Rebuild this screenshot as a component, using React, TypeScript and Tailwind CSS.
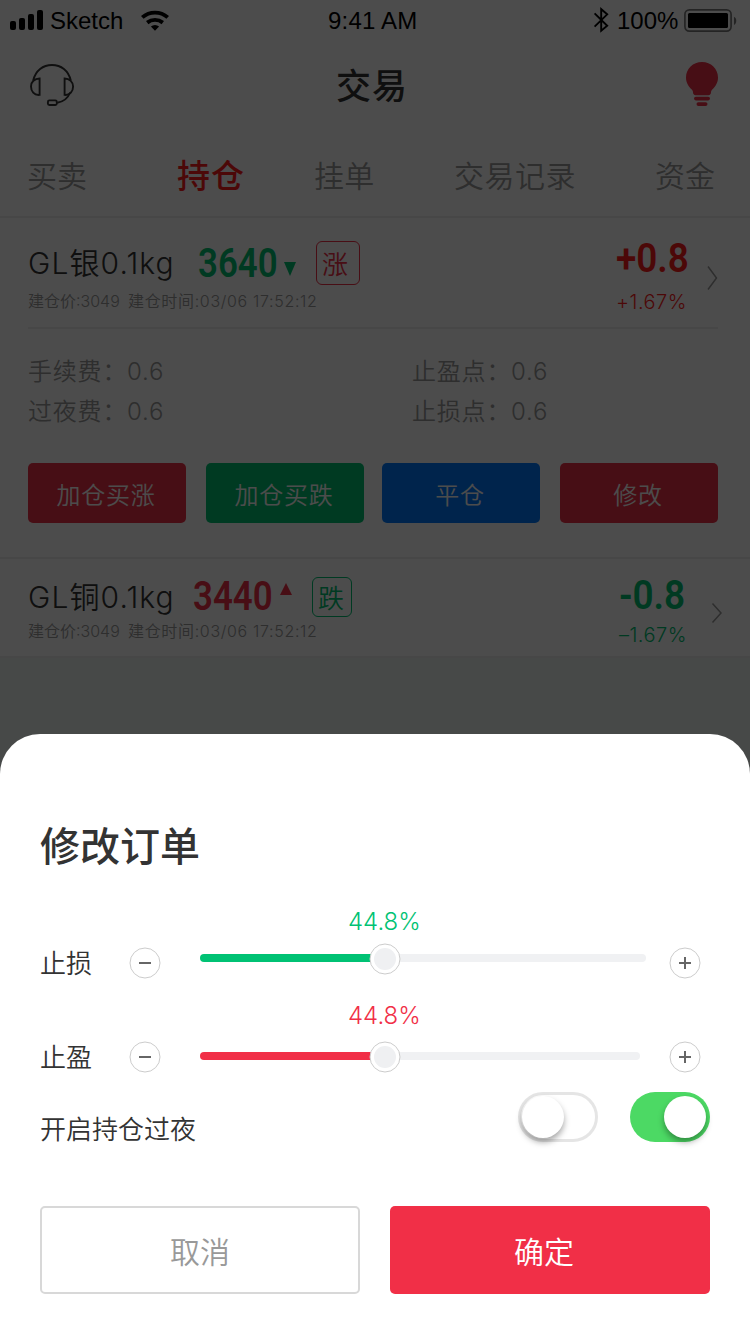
import type { ReactNode } from "react";

const statusFont = "font-['Liberation_Sans',sans-serif]";
const dinFont = "font-['Roboto','Liberation_Sans',sans-serif] font-semibold";

function Signal() {
  return (
    <svg width="34" height="22" viewBox="0 0 34 22" className="block">
      <rect x="0" y="11" width="6" height="9" rx="2" />
      <rect x="9" y="8" width="6" height="12" rx="2" />
      <rect x="18" y="4" width="6" height="16" rx="2" />
      <rect x="27" y="0" width="6" height="20" rx="2" />
    </svg>
  );
}

function Wifi() {
  return (
    <svg width="30" height="22" viewBox="140 9 30 22" className="block">
      <g fill="none" stroke="#000" strokeWidth="3.9">
        <path d="M142.3 16.4a19.2 19.2 0 0 1 25.4 0" />
        <path d="M147.2 21.6a12.7 12.7 0 0 1 15.6 0" />
      </g>
      <path d="M155 29.8l-4.1-4.2a6 6 0 0 1 8.2 0z" />
    </svg>
  );
}

function Bluetooth() {
  return (
    <svg width="16" height="26" viewBox="593 7 16 26" className="mb-[2px] block">
      <path d="M594.6 13.4L607.2 25.8L601.2 30.8V9.2L607.2 14.4L594.6 26.6" fill="none" stroke="#000" strokeWidth="1.9" />
    </svg>
  );
}

function Battery() {
  return (
    <svg width="54" height="24" viewBox="684 8 54 24" className="mb-[2px] block">
      <rect x="684.9" y="9.9" width="46.2" height="21.2" rx="4.5" fill="none" stroke="#7a7a7a" strokeWidth="1.7" />
      <rect x="688" y="13" width="40" height="15" rx="1.5" />
      <path d="M734 16.8c3 1.2 3 7 0 8.2z" fill="#7a7a7a" />
    </svg>
  );
}

function Headset() {
  return (
    <svg width="46" height="44" viewBox="29 63 46 44" className="mt-[2px] block" fill="none" stroke="#333" strokeWidth="1.9">
      <path d="M33.2 80.5C35.5 70.5 43 65 52 65s16.500 5.500 18.800 15.500" />
      <path d="M39.600 78.500v16.400C34 95.500 31 91 31 86.500s3.500-8 8.600-8z" />
      <path d="M64.600 78.500v16.400C70 95.500 73.100 91 73.100 86.500s-3.500-8-8.500-8z" />
      <path d="M70.200 92.500c-2.300 5.500-6.700 9.300-13 10.300" />
      <rect x="47.900" y="100.400" width="8.900" height="4.600" rx="1.500" />
    </svg>
  );
}

function Bulb() {
  return (
    <svg width="34" height="46" viewBox="685 61 34 46" className="block" fill="#ef2f46">
      <path d="M702 62c9 0 16 6.800 16 15.500 0 5.200-2.600 9-5.500 11.700-1 1-1.500 1.900-1.500 3.100 0 1.700-.9 2.900-2.600 2.900h-12.800c-1.700 0-2.600-1.200-2.600-2.900 0-1.200-.5-2.100-1.500-3.100-2.900-2.700-5.500-6.500-5.500-11.700C686 68.800 693 62 702 62z" />
      <rect x="694" y="96.800" width="16" height="3.600" rx="1.800" />
      <rect x="696.500" y="102.200" width="11" height="3.800" rx="1.900" />
    </svg>
  );
}

function Chevron({ small = false }: { small?: boolean }) {
  return small ? (
    <svg width="12" height="22" viewBox="0 0 12 22" className="block">
      <path d="M1.500 1.500L10 11L1.500 20.500" fill="none" stroke="#999" strokeWidth="1.500" />
    </svg>
  ) : (
    <svg width="12" height="26" viewBox="0 0 12 26" className="block">
      <path d="M2 1.500L10.500 13L2 24.500" fill="none" stroke="#999" strokeWidth="1.500" />
    </svg>
  );
}

function StatusBar() {
  return (
    <div className={`flex h-[42px] items-center pl-2.5 pr-3 text-[24px] leading-none text-black ${statusFont}`}>
      <div className="flex w-[318px] items-center">
        <Signal />
        <span className="ml-[6px] w-[90px]">Sketch</span>
        <Wifi />
      </div>
      <span className="w-[265px] tracking-[0.2px] whitespace-nowrap">9:41 AM</span>
      <Bluetooth />
      <span className="ml-[8px] w-[67px]">100%</span>
      <Battery />
    </div>
  );
}

function Tabs() {
  return (
    <nav className="flex h-[88px] items-center pt-[8px] pl-[27px] text-[30px] leading-[44px] font-[350] text-[#999]">
      <span className="w-[150px]">买卖</span>
      <span className="w-[137px] text-[33px] font-medium tracking-[1px] text-[#ff1c1c]">持仓</span>
      <span className="w-[140px] tracking-[0.3px]">挂单</span>
      <span className="w-[201px] tracking-[0.5px]">交易记录</span>
      <span>资金</span>
    </nav>
  );
}

function OpenInfo() {
  return (
    <p className="flex h-5 items-center gap-2.5 text-[16px] leading-5 font-[350] text-[#999]">
      <span className="w-[90px] whitespace-nowrap">建仓价:3049</span>
      <span className="tracking-[0.67px] whitespace-nowrap">建仓时间:03/06 17:52:12</span>
    </p>
  );
}

function Fee({ label }: { label: string }) {
  return (
    <div className="flex h-10 items-center pt-px text-[24px] font-[350] tracking-[0.8px] text-[#999]">
      <span className="w-[99px] whitespace-nowrap">{label}：</span>
      <span>0.6</span>
    </div>
  );
}

function ActionButton({ className, children }: { className: string; children: ReactNode }) {
  return (
    <button className={`flex h-[60px] w-[158px] items-center justify-center rounded-[5px] pt-[5px] pr-[2px] text-[24px] font-[350] tracking-[0.8px] text-white ${className}`}>
      {children}
    </button>
  );
}

function RoundButton({ plus = false }: { plus?: boolean }) {
  return (
    <button className="block shrink-0">
      <svg width="32" height="32" viewBox="0 0 32 32" className="block" fill="none">
        <circle cx="16" cy="16" r="15" fill="#fff" stroke="#ccc" />
        <path d={plus ? "M10 16h12M16 10v12" : "M10 16h12"} stroke="#666" strokeWidth="2" />
      </svg>
    </button>
  );
}

type SliderProps = { label: string; text: string; fill: string; track: string; zone: string };

function SliderRow({ label, text, fill, track, zone }: SliderProps) {
  return (
    <div className="flex h-[76px] items-end">
      <span className="w-[89px] text-[26px] leading-[30px] font-[350] text-[#333]">{label}</span>
      <RoundButton />
      <div className={`ml-[39px] h-[76px] ${track}`}>
        <div className={`flex h-9 items-center pt-[2px] pl-[148px] text-[24px] font-[350] ${text}`}>44.8%</div>
        <div className={`flex items-center ${zone}`}>
          <div className={`h-2 w-[175px] rounded-l-full ${fill}`} />
          <svg width="32" height="32" viewBox="0 0 32 32" className="z-10 mt-[2px] -mr-[5px] -ml-[6px] block shrink-0">
            <circle cx="16" cy="16" r="15" fill="#fff" stroke="#ccc" />
            <circle cx="16" cy="16" r="11" fill="#eff0f2" />
          </svg>
          <div className="h-2 flex-1 rounded-r-full bg-[#f0f1f3]" />
        </div>
      </div>
      <div className="flex-1" />
      <RoundButton plus />
    </div>
  );
}

function OrderSheet() {
  return (
    <section className="absolute inset-x-0 bottom-0 h-[600px] rounded-t-[40px] bg-white px-10 pt-[83px]">
      <h2 className="h-[60px] text-[40px] leading-[60px] font-medium text-[#333]">修改订单</h2>
      <div className="mt-[26px] flex flex-col gap-[18px] pr-[9px]">
        <SliderRow label="止损" text="text-[#00c274]" fill="bg-[#00c274]" track="w-[446px]" zone="h-[38px]" />
        <SliderRow label="止盈" text="text-[#f12f47]" fill="bg-[#f12f47]" track="w-[440px]" zone="h-[46px]" />
      </div>
      <div className="mt-[19px] flex h-[50px] items-start">
        <span className="flex-1 pt-[20px] text-[26px] leading-9 font-[350] text-[#333]">开启持仓过夜</span>
        <div className="h-[50px] w-20 rounded-full border-[3px] border-[#e5e5e5]">
          <div className="mt-px ml-px size-[42px] rounded-full bg-white shadow-[0_4px_6px_rgba(0,0,0,0.35)]" />
        </div>
        <div className="ml-8 flex h-[50px] w-20 justify-end rounded-full bg-[#4cd964] p-1">
          <div className="size-[42px] rounded-full bg-white shadow-[0_4px_6px_rgba(0,0,0,0.35)]" />
        </div>
      </div>
      <div className="mt-16 flex gap-[30px] text-[30px] font-[350]">
        <button className="h-[88px] w-80 rounded-[5px] border-2 border-[#d8d8d8] pt-[5px] text-[#999]">取消</button>
        <button className="h-[88px] w-80 rounded-[5px] bg-[#f12f47] pt-[5px] pr-[12px] text-white">确定</button>
      </div>
    </section>
  );
}

export default function App() {
  return (
    <div className="relative h-[1334px] w-[750px] overflow-hidden bg-[#eef6f1] font-['Inter','Noto_Sans_CJK_SC',sans-serif]">
      <div className="bg-white">
        <StatusBar />
        <header className="flex h-[86px] items-center justify-between pr-[31px] pb-[2px] pl-[29px]">
          <Headset />
          <h1 className="pt-[4px] pr-[16px] text-[35px] font-medium tracking-[1px] text-[#333]">交易</h1>
          <Bulb />
        </header>
        <Tabs />

        <article className="h-[341px] border-t-2 border-[#eee]">
          <div className="mx-7 h-[111px] w-[690px] border-b-2 border-[#eee]">
            <div className="flex justify-between">
              <div className="pt-[20px]">
                <div className="flex h-[50px] items-center">
                  <h2 className="w-[170px] text-[30px] font-[350] tracking-[1.1px] whitespace-nowrap text-[#333]">GL银0.1kg</h2>
                  <span className={`inline-block w-[86px] origin-left scale-x-[0.85] pt-[2px] text-[41px] text-[#00c272] ${dinFont}`}>3640</span>
                  <svg width="12" height="14" viewBox="0 0 12 14" className="mt-[12px]"><path d="M0 0h12L6 14z" fill="#00c272" /></svg>
                  <span className="ml-5 flex size-[44px] items-center rounded-md border border-[#f12f47] pt-[2px] pl-[5px] text-[26px] font-[350] text-[#f12f47]">涨</span>
                </div>
                <div className="pt-[3px]"><OpenInfo /></div>
              </div>
              <div className="flex">
                <div className="w-[90px] pt-[16px] text-[#ff1c1c]">
                  <div className={`h-12 w-[96px] origin-left scale-x-[0.9] text-[41px] leading-[48px] ${dinFont}`}>+0.8</div>
                  <div className="pt-[4px] text-[20px] leading-8 font-[350] tracking-[0.5px]">+1.67%</div>
                </div>
                <div className="pt-[47px]"><Chevron /></div>
              </div>
            </div>
          </div>
          <div className="grid grid-cols-[384px_1fr] pt-[22px] pl-7">
            <Fee label="手续费" />
            <Fee label="止盈点" />
            <Fee label="过夜费" />
            <Fee label="止损点" />
          </div>
          <div className="flex gap-5 pt-[32px] pl-7">
            <ActionButton className="bg-[#ef2f46]">加仓买涨</ActionButton>
            <ActionButton className="bg-[#00c272]">加仓买跌</ActionButton>
            <ActionButton className="-ml-[2px] bg-[#007aff]">平仓</ActionButton>
            <ActionButton className="bg-[#ef2f46]">修改</ActionButton>
          </div>
        </article>

        <article className="h-[101px] border-y-2 border-[#eee] px-7">
          <div className="flex justify-between">
            <div className="pt-[14px]">
              <div className="flex h-[48px] items-center">
                <h2 className="w-[165px] pt-px text-[30px] font-[350] tracking-[1.1px] whitespace-nowrap text-[#333]">GL铜0.1kg</h2>
                <span className={`inline-block w-[87px] origin-left scale-x-[0.85] text-[41px] text-[#f12f47] ${dinFont}`}>3440</span>
                <svg width="12" height="12" viewBox="0 0 12 12" className="mb-[16px]"><path d="M0 12h12L6 0z" fill="#f12f47" /></svg>
                <span className="ml-5 flex size-[40px] items-center rounded-md border border-[#00c272] pt-[3px] pl-[5px] text-[26px] font-[350] text-[#00c272]">跌</span>
              </div>
              <OpenInfo />
            </div>
            <div className="flex">
              <div className="w-[92px] pt-[12px] text-[#00c272]">
                <div className={`h-12 w-[96px] origin-left scale-x-[0.9] text-[41px] leading-[48px] ${dinFont}`}>-0.8</div>
                <div className="text-[20px] leading-8 font-[350] tracking-[0.5px]">–1.67%</div>
              </div>
              <div className="-mr-px pt-[43px]"><Chevron small /></div>
            </div>
          </div>
        </article>
      </div>
      <div className="absolute inset-0 bg-black/70" />
      <OrderSheet />
    </div>
  );
}
